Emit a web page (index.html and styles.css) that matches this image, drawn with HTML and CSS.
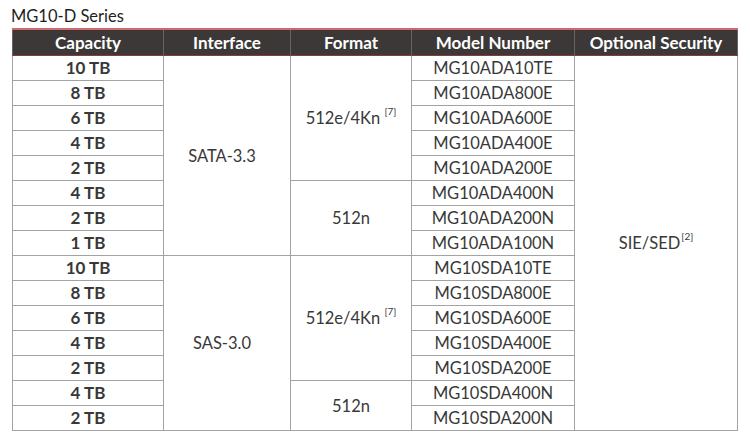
FILE: index.html
```html
<!DOCTYPE html>
<html>
<head>
<meta charset="utf-8">
<link rel="stylesheet" href="styles.css">
</head>
<body>
<div class="page">
  <div class="title">MG10-D Series</div>
  <table class="spec">
    <colgroup>
      <col class="c1"><col class="c2"><col class="c3"><col class="c4"><col class="c5">
    </colgroup>
    <thead>
      <tr><th>Capacity</th><th>Interface</th><th>Format</th><th>Model Number</th><th>Optional Security</th></tr>
    </thead>
    <tbody>
      <tr><td class="cap">10 TB</td><td rowspan="8" class="iface">SATA-3.3</td><td rowspan="5">512e/4Kn <sup>[7]</sup></td><td>MG10ADA10TE</td><td rowspan="15">SIE/SED<sup class="tight">[2]</sup></td></tr>
      <tr><td class="cap">8 TB</td><td>MG10ADA800E</td></tr>
      <tr><td class="cap">6 TB</td><td>MG10ADA600E</td></tr>
      <tr><td class="cap">4 TB</td><td>MG10ADA400E</td></tr>
      <tr><td class="cap">2 TB</td><td>MG10ADA200E</td></tr>
      <tr><td class="cap">4 TB</td><td rowspan="3">512n</td><td>MG10ADA400N</td></tr>
      <tr><td class="cap">2 TB</td><td>MG10ADA200N</td></tr>
      <tr><td class="cap">1 TB</td><td>MG10ADA100N</td></tr>
      <tr><td class="cap">10 TB</td><td rowspan="7" class="iface">SAS-3.0</td><td rowspan="5">512e/4Kn <sup>[7]</sup></td><td>MG10SDA10TE</td></tr>
      <tr><td class="cap">8 TB</td><td>MG10SDA800E</td></tr>
      <tr><td class="cap">6 TB</td><td>MG10SDA600E</td></tr>
      <tr><td class="cap">4 TB</td><td>MG10SDA400E</td></tr>
      <tr><td class="cap">2 TB</td><td>MG10SDA200E</td></tr>
      <tr><td class="cap">4 TB</td><td rowspan="2">512n</td><td>MG10SDA400N</td></tr>
      <tr><td class="cap">2 TB</td><td>MG10SDA200N</td></tr>
    </tbody>
  </table>
</div>
</body>
</html>
```

FILE: styles.css
```css
html, body {
  margin: 0;
  padding: 0;
  background: #ffffff;
}
.page {
  padding: 5px 13px 0 12px;
  font-family: Lato, "Open Sans", sans-serif;
  color: #383838;
}
.title {
  font-size: 16.5px;
  line-height: 22px;
  color: #1e1e1e;
  margin-left: -1px;
}
.spec {
  border-collapse: collapse;
  width: 725px;
  table-layout: fixed;
  margin-top: 1px;
}
.c1 { width: 151px; }
.c2 { width: 127px; }
.c3 { width: 121px; }
.c4 { width: 163px; }
.c5 { width: 163px; }
.spec th {
  background: #3c3838;
  color: #ffffff;
  font-weight: 700;
  font-size: 17px;
  height: 25px;
  padding: 0;
  border-top: 2px solid #d06a6a;
  border-bottom: 1px solid #8a3a3a;
  border-left: 1px solid #6a6262;
  border-right: 1px solid #6a6262;
  text-align: center;
  vertical-align: middle;
  line-height: 22px;
}
.spec td {
  border: 1px solid #a3a3a3;
  height: 24px;
  padding: 0;
  text-align: center;
  vertical-align: middle;
  font-size: 16.5px;
  line-height: 22px;
}
.spec td.cap {
  font-weight: 700;
  font-size: 17px;
}
.spec td.iface {
  padding-right: 10px;
}
.spec sup {
  font-size: 10px;
  vertical-align: top;
  line-height: 10px;
  position: relative;
  top: -1px;
}
.spec sup.tight {
  margin-left: 1px;
}
```
